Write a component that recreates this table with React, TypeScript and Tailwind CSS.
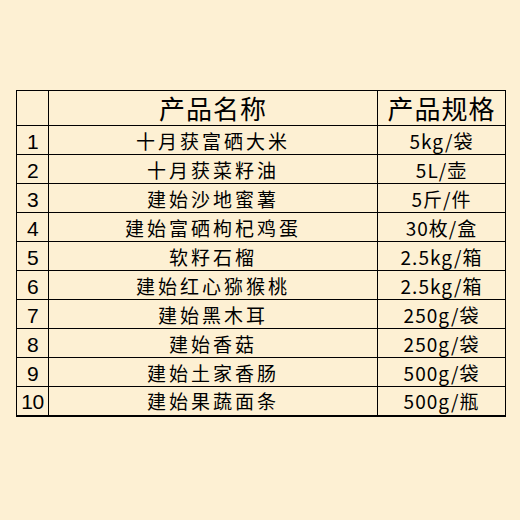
const rows = [
  { no: '1', name: '十月获富硒大米', spec: '5kg/袋' },
  { no: '2', name: '十月获菜籽油', spec: '5L/壶' },
  { no: '3', name: '建始沙地蜜薯', spec: '5斤/件' },
  { no: '4', name: '建始富硒枸杞鸡蛋', spec: '30枚/盒' },
  { no: '5', name: '软籽石榴', spec: '2.5kg/箱' },
  { no: '6', name: '建始红心猕猴桃', spec: '2.5kg/箱' },
  { no: '7', name: '建始黑木耳', spec: '250g/袋' },
  { no: '8', name: '建始香菇', spec: '250g/袋' },
  { no: '9', name: '建始土家香肠', spec: '500g/袋' },
  { no: '10', name: '建始果蔬面条', spec: '500g/瓶' },
];

const cjk = { fontFamily: '"Noto Sans CJK SC", "Noto Sans", sans-serif' };

export default function App() {
  return (
    <div className="w-[520px] h-[520px] bg-[#fdf0d3] pt-[90px] pl-[16px]" style={cjk}>
      <table className="border-collapse border-b-2 border-black text-black">
        <thead>
          <tr className="h-[35px]">
            <th className="w-[32px] border border-black p-0"></th>
            <th className="w-[329px] border border-black p-0 text-[26px] font-normal leading-none tracking-[1px]">
              产品名称
            </th>
            <th className="w-[128px] border border-black p-0 text-[26px] font-normal leading-none tracking-[1px]">
              产品规格
            </th>
          </tr>
        </thead>
        <tbody>
          {rows.map((r) => (
            <tr key={r.no} className="h-[29px]">
              <td
                className="border border-black p-0 pt-[2px] text-center text-[21px] leading-none tracking-[-0.5px]"
                style={{ fontFamily: '"Liberation Sans", sans-serif' }}
              >
                {r.no}
              </td>
              <td className="border border-black p-0 text-center text-[19px] leading-none tracking-[3px]">
                {r.name}
              </td>
              <td className="border border-black p-0 text-center text-[19px] leading-none tracking-[1px]">
                {r.spec}
              </td>
            </tr>
          ))}
        </tbody>
      </table>
    </div>
  );
}
